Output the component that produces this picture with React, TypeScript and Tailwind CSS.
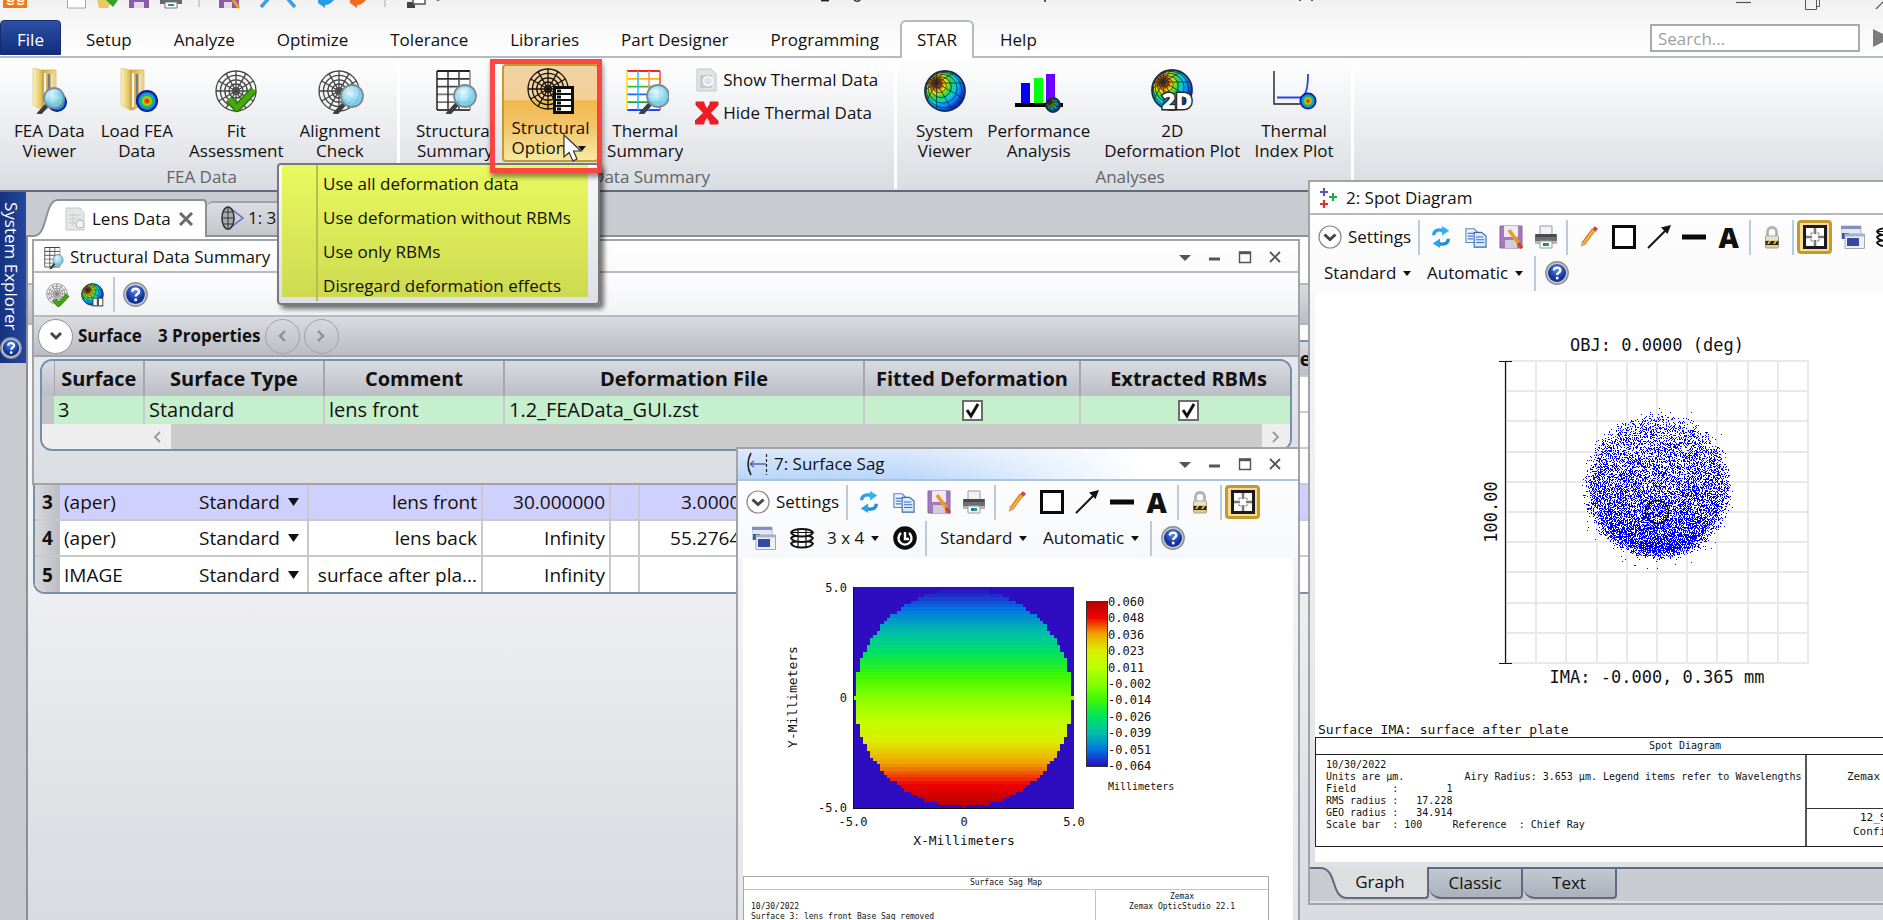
import type { ReactNode } from "react";

// ---------- shared colours ----------

type Stop = [number, number, number, number];

const RAINBOW: Stop[] = [
  [0, 45, 12, 192],
  [0.1, 0, 120, 225],
  [0.2, 0, 190, 170],
  [0.3, 0, 228, 95],
  [0.4, 60, 248, 0],
  [0.5, 135, 255, 0],
  [0.6, 188, 255, 0],
  [0.7, 220, 238, 0],
  [0.8, 240, 165, 0],
  [0.9, 240, 0, 0],
  [1, 178, 0, 0],
];

function rainbow(t: number) {
  const v = Math.min(1, Math.max(0, t));
  for (let i = 1; i < RAINBOW.length; i++) {
    const a = RAINBOW[i - 1];
    const b = RAINBOW[i];
    if (v <= b[0]) {
      const k = (v - a[0]) / (b[0] - a[0]);
      const mix = (n: 1 | 2 | 3) => Math.round(a[n] + (b[n] - a[n]) * k);
      return `rgb(${mix(1)},${mix(2)},${mix(3)})`;
    }
  }
  return "rgb(178,0,0)";
}

function Defs() {
  return (
    <svg width="0" height="0" className="absolute" aria-hidden="true">
      <defs>
        <radialGradient id="globe" cx="0.28" cy="0.3" r="0.78">
          <stop offset="0" stopColor="#8c1500" />
          <stop offset="0.16" stopColor="#d04400" />
          <stop offset="0.3" stopColor="#f4e000" />
          <stop offset="0.46" stopColor="#30d840" />
          <stop offset="0.62" stopColor="#00ccf0" />
          <stop offset="0.82" stopColor="#0a74ff" />
          <stop offset="1" stopColor="#0018c8" />
        </radialGradient>
        <radialGradient id="spot">
          <stop offset="0" stopColor="#d01000" />
          <stop offset="0.25" stopColor="#f08000" />
          <stop offset="0.35" stopColor="#b8d800" />
          <stop offset="0.52" stopColor="#20b860" />
          <stop offset="0.7" stopColor="#00a0e0" />
          <stop offset="0.85" stopColor="#1020c0" />
          <stop offset="1" stopColor="#101070" />
        </radialGradient>
        <linearGradient id="folder" x1="0" x2="1">
          <stop offset="0" stopColor="#fdf3b8" />
          <stop offset="1" stopColor="#e0bc56" />
        </linearGradient>
        <linearGradient id="folderShade" x1="0" x2="1">
          <stop offset="0" stopColor="#c9a544" />
          <stop offset="1" stopColor="#f6dc8c" />
        </linearGradient>
        <radialGradient id="lensGlass" cx="0.4" cy="0.35">
          <stop offset="0" stopColor="#eefcff" />
          <stop offset="0.6" stopColor="#a4e4f6" />
          <stop offset="1" stopColor="#74cdea" />
        </radialGradient>
        <radialGradient id="helpBall" cx="0.5" cy="0.3">
          <stop offset="0" stopColor="#5f8ce8" />
          <stop offset="1" stopColor="#12349c" />
        </radialGradient>
        <linearGradient id="bar" x1="0" y1="0" x2="0" y2="1">
          {RAINBOW.map(([at]) => (
            <stop key={at} offset={at} stopColor={rainbow(1 - at)} />
          ))}
        </linearGradient>
      </defs>
    </svg>
  );
}

// ---------- ribbon icons ----------

function Lens({ x, y, r = 9 }: { x: number; y: number; r?: number }) {
  return (
    <g>
      <path
        d={`M${x - r * 0.7} ${y + r * 0.7}L${x - r * 1.5} ${y + r * 1.6}`}
        stroke="#3a3f44"
        strokeWidth={r * 0.42}
        strokeLinecap="round"
      />
      <circle cx={x} cy={y} r={r} fill="url(#lensGlass)" fillOpacity="0.92" stroke="#7d8c94" strokeWidth="1.8" />
    </g>
  );
}

function Target({ cx, cy, r, color = "#2f2f2f" }: { cx: number; cy: number; r: number; color?: string }) {
  const spokes = [0, 30, 60, 90, 120, 150];
  return (
    <g stroke={color} fill="none" strokeWidth="1.3">
      {[1, 0.78, 0.56, 0.35, 0.16].map((k) => (
        <circle key={k} cx={cx} cy={cy} r={r * k} />
      ))}
      {spokes.map((a) => {
        const dx = Math.cos((a * Math.PI) / 180) * r;
        const dy = Math.sin((a * Math.PI) / 180) * r;
        return <path key={a} d={`M${cx - dx} ${cy - dy}L${cx + dx} ${cy + dy}`} />;
      })}
    </g>
  );
}

function Folder() {
  return (
    <g>
      <path d="M8 2L17 4V44L8 39Z" fill="url(#folder)" stroke="#d8c070" strokeWidth="0.6" />
      <path d="M17 4H31V38L20 44H17Z" fill="url(#folderShade)" stroke="#c8a850" strokeWidth="0.6" />
      <path d="M20 7V41" stroke="#f4f4ee" strokeWidth="2" />
      <path d="M24 8V38" stroke="#7c7c78" strokeWidth="2.4" />
      <path d="M27 8V36" stroke="#e8e4d8" strokeWidth="1.6" />
    </g>
  );
}

function Globe({ cx, cy, r }: { cx: number; cy: number; r: number }) {
  const fx = cx - r * 0.42;
  const fy = cy - r * 0.4;
  const rings = [0.18, 0.34, 0.52, 0.72, 0.88];
  return (
    <g>
      <circle cx={cx} cy={cy} r={r} fill="url(#globe)" stroke="#1c2c50" strokeWidth="1.8" />
      <g fill="none" stroke="#12302c" strokeWidth="0.8">
        {rings.map((k) => (
          <circle key={k} cx={fx + (cx - fx) * k} cy={fy + (cy - fy) * k} r={r * k} />
        ))}
        {[0, 30, 60, 90, 120, 150, 180, 210, 240, 270, 300, 330].map((a) => {
          const ux = Math.cos((a * Math.PI) / 180);
          const uy = Math.sin((a * Math.PI) / 180);
          const ox = fx - cx;
          const oy = fy - cy;
          const b = ox * ux + oy * uy;
          const t = -b + Math.sqrt(b * b - (ox * ox + oy * oy - r * r));
          return <path key={a} d={`M${fx} ${fy}L${fx + ux * t} ${fy + uy * t}`} />;
        })}
      </g>
    </g>
  );
}

function Grid({ colorful = false, w = 33, h = 39 }: { colorful?: boolean; w?: number; h?: number }) {
  const rows = colorful
    ? ["#ff2020", "#ffb400", "#30c030", "#2060ff", "#20a040", "#2040ff"]
    : ["#222", "#333", "#444", "#777", "#777", "#444"];
  const cols = colorful ? ["#ffe000", "#20c0ff", "#ff9060", "#ff4040"] : ["#222", "#333", "#444", "#888"];
  return (
    <g>
      <rect x="6" y="5" width={w} height={h} fill="#fff" />
      {rows.map((c, i) => (
        <path key={i} d={`M6 ${5 + (h / 5) * i}h${w}`} stroke={c} strokeWidth="1.8" />
      ))}
      {cols.map((c, i) => (
        <path key={i} d={`M${6 + (w / 3) * i} 5v${h}`} stroke={c} strokeWidth="1.5" />
      ))}
    </g>
  );
}

function Ico({ children, size = 48 }: { children: ReactNode; size?: number }) {
  return (
    <svg width={size} height={size} viewBox="0 0 48 48" fill="none" aria-hidden="true" className="shrink-0">
      {children}
    </svg>
  );
}

const CheckMark = <path d="M17 33L25 42L42 24" stroke="#2c7c08" strokeWidth="8" strokeLinejoin="round" />;
const CheckMarkTop = <path d="M17 33L25 42L42 24" stroke="#46aa0c" strokeWidth="5" strokeLinejoin="round" />;

const icons = {
  feaViewer: (
    <Ico>
      <Folder />
      <circle cx="32" cy="36" r="10" fill="url(#spot)" />
      <Lens x={29} y={32} r={10} />
    </Ico>
  ),
  loadFea: (
    <Ico>
      <Folder />
      <circle cx="34" cy="35" r="11" fill="url(#spot)" />
    </Ico>
  ),
  fit: (
    <Ico>
      <Target cx={24} cy={25} r={20} color="#444" />
      {CheckMark}
      {CheckMarkTop}
    </Ico>
  ),
  alignment: (
    <Ico>
      <Target cx={23} cy={25} r={20} color="#444" />
      <Lens x={36} y={30} r={11} />
    </Ico>
  ),
  summary: (
    <Ico>
      <Grid />
      <Lens x={34} y={30} r={11} />
    </Ico>
  ),
  options: (
    <Ico>
      <Target cx={21} cy={23} r={20} color="#15110a" />
      <rect x="27.500" y="21.500" width="18" height="25" fill="#fff" stroke="#0c0c0c" strokeWidth="3" />
      <path d="M27 28H45M26 34H45M26 40H45" stroke="#111" strokeWidth="1.800" />
      <path d="M30 25h4M30 31h4M30 37h4M30 43h4" stroke="#111" strokeWidth="3" />
    </Ico>
  ),
  thermal: (
    <Ico>
      <Grid colorful />
      <Lens x={37} y={30} r={11} />
    </Ico>
  ),
  system: (
    <Ico>
      <Globe cx={24} cy={25} r={20} />
    </Ico>
  ),
  performance: (
    <Ico>
      <path d="M0 39H48" stroke="#000" strokeWidth="4" />
      <path d="M6 17h9v20H6z" fill="#0000ff" />
      <path d="M19 12h9v25h-9z" fill="#00ff10" />
      <path d="M31 8h9v29h-9z" fill="#6a00ff" />
      <Globe cx={38} cy={39} r={7} />
    </Ico>
  ),
  plot2d: (
    <Ico>
      <Globe cx={24} cy={24} r={20} />
      <text
        x="14"
        y="43"
        fontSize="23"
        fontWeight="800"
        fontFamily="Open Sans, sans-serif"
        fill="#fff"
        stroke="#2a2a2a"
        strokeWidth="3"
        paintOrder="stroke"
      >
        2D
      </text>
    </Ico>
  ),
  thermalIndex: (
    <Ico>
      <path d="M4 5V38H30" stroke="#222" strokeWidth="1.4" />
      <path d="M7 31.500H30Q38 31 38 8" stroke="#2244ee" strokeWidth="1.8" />
      <circle cx="38" cy="35" r="8.500" fill="url(#spot)" />
    </Ico>
  ),
};

// ---------- small toolbar icons ----------

function Tiny({ children, size = 24 }: { children: ReactNode; size?: number }) {
  return (
    <svg width={size} height={size} viewBox="0 0 24 24" fill="none" aria-hidden="true" className="shrink-0">
      {children}
    </svg>
  );
}

function HelpIcon({ size = 24 }: { size?: number }) {
  return (
    <Tiny size={size}>
      <circle cx="12" cy="12" r="11.200" fill="#c4c8cc" stroke="#8c9094" strokeWidth="1.400" />
      <circle cx="12" cy="12" r="9" fill="url(#helpBall)" />
      <path d="M8.800 9.400C8.800 5.600 15.400 5.600 15.400 9.300C15.400 11.600 12.200 11.500 12.200 14" stroke="#fff" strokeWidth="2.300" />
      <circle cx="12.200" cy="17" r="1.500" fill="#fff" />
    </Tiny>
  );
}

const tiny = {
  refresh: (
    <Tiny size={22}>
      <path d="M4 10C4 5 9 3 14 5" stroke="#2aa0e8" strokeWidth="3.600" />
      <path d="M13 0L21 5L13 10.500Z" fill="#38b0f0" />
      <path d="M20 14C20 19 15 21 10 19" stroke="#1c90dc" strokeWidth="3.600" />
      <path d="M11 13.500L3 19L11 24Z" fill="#2aa4ea" />
    </Tiny>
  ),
  copy: (
    <Tiny size={22}>
      <path d="M1 3H10L14 7V18H1Z" fill="#eaf2fc" stroke="#5b84c4" strokeWidth="1.200" />
      <path d="M3 8H10M3 11H9M3 14H9" stroke="#4a7cd0" strokeWidth="1.300" />
      <path d="M10 7H18L23 11V23H10Z" fill="#dceafb" stroke="#3a64ac" strokeWidth="1.200" />
      <path d="M12 12H20M12 15H21M12 18H21" stroke="#3a70cc" strokeWidth="1.300" />
    </Tiny>
  ),
  save: (
    <Tiny>
      <path d="M1 1H23V23H1Z" fill="#a478bc" stroke="#8a62a4" strokeWidth="1" />
      <path d="M5 1H19V12H5Z" fill="#eceaf2" />
      <path d="M6 15H18V23H6Z" fill="#d2ccda" />
      <path d="M10 5L20 19" stroke="#f09a20" strokeWidth="3.600" />
      <path d="M19 18L23 23" stroke="#d04020" strokeWidth="3" />
    </Tiny>
  ),
  print: (
    <Tiny>
      <path d="M6 1H18V10H6Z" fill="#f2f2f2" stroke="#9a9a9a" />
      <path d="M1 9H23V18H1Z" fill="#6c6f72" />
      <path d="M2 9H22V12H2Z" fill="#484a4c" />
      <path d="M1 16H23V19H1Z" fill="#b4b6b8" />
      <path d="M6 16H18V23H6Z" fill="#fff" stroke="#999" />
      <path d="M9 18H12V21H9Z" fill="#2070d0" />
      <path d="M12 18H15V21H12Z" fill="#28a070" />
    </Tiny>
  ),
  pencil: (
    <Tiny size={22}>
      <path d="M6 19L17 4" stroke="#c87810" strokeWidth="4.600" />
      <path d="M6.500 18.500L17 4.500" stroke="#f8b040" strokeWidth="2.600" />
      <path d="M17.500 5L20 1.500" stroke="#d04838" strokeWidth="4.600" />
      <path d="M3 23L4 16L9 20Z" fill="#d8a870" />
    </Tiny>
  ),
  rect: (
    <Tiny>
      <rect x="1.500" y="1.500" width="21" height="21" fill="#fff" stroke="#0a0a0a" strokeWidth="3" />
    </Tiny>
  ),
  arrow: (
    <Tiny>
      <path d="M1 23L18 6" stroke="#111" strokeWidth="2" />
      <path d="M24 0L20.500 9L14 2.500Z" fill="#111" />
    </Tiny>
  ),
  line: (
    <Tiny>
      <path d="M0 12H24" stroke="#0a0a0a" strokeWidth="5" />
    </Tiny>
  ),
  lock: (
    <Tiny>
      <path d="M7.500 13V7C7.500 1 16.500 1 16.500 7V13" stroke="#b4b4b4" strokeWidth="2.800" />
      <rect x="5.500" y="11" width="13" height="12" rx="1" fill="#d4cca8" stroke="#a8a284" />
      <path d="M5.500 16H18.500V20H5.500Z" fill="#2c2810" />
      <path d="M7 19L9 16H11L9 19ZM13 19L15 16H17L15 19Z" fill="#f0c810" />
      <path d="M6 11.500H18V15H6Z" fill="#e6e2d4" />
    </Tiny>
  ),
  fit: (
    <Tiny>
      <rect x="1.500" y="1.500" width="21" height="21" fill="#fff" stroke="#1c1a1a" strokeWidth="3" />
      <path d="M12 3V9M12 15V21M3 12H9M15 12H21" stroke="#7c7a7a" strokeWidth="2.600" />
      <path d="M9 7V9H7M15 7V9H17M9 17V15H7M15 17V15H17" stroke="#8c8a8a" strokeWidth="1" />
    </Tiny>
  ),
  windows: (
    <Tiny>
      <path d="M0 1H20V13H0Z" fill="#e4e8f0" stroke="#b4bcc8" />
      <path d="M0 1H20V4H0Z" fill="#8290c4" />
      <path d="M1 8H8V14H1Z" fill="#3c50a8" />
      <path d="M4 9H23.500V23.500H4Z" fill="#eef0f4" stroke="#a0a8b4" />
      <path d="M6 13H18V21H6Z" fill="#3448a8" />
      <path d="M4 9H23V11.500H4Z" fill="#a8b2d0" />
    </Tiny>
  ),
  layers: (
    <Tiny>
      <g stroke="#111" strokeWidth="1.800">
        <path d="M1 17.500Q3 15 12 15Q21 15 23 17.500Q21 21.500 12 21.500Q3 21.500 1 17.500Z" fill="#fff" />
        <path d="M1 12Q3 9.500 12 9.500Q21 9.500 23 12Q21 16 12 16Q3 16 1 12Z" fill="#fff" />
        <path d="M1 6.500Q3 3 12 3Q21 3 23 6.500Q21 10.500 12 10.500Q3 10.500 1 6.500Z" fill="#fff" />
        <path d="M8 3V10M16 3V10M8 11V16M16 11V16M8 17V21M16 17V21M2 6.500H22" strokeWidth="1.200" />
      </g>
    </Tiny>
  ),
  clock: (
    <Tiny>
      <circle cx="12" cy="12" r="11.800" fill="#0c0c0c" />
      <path d="M8 7A6.500 6.500 0 1 0 16 7" stroke="#fff" strokeWidth="2.400" />
      <path d="M12 6V13H16" stroke="#fff" strokeWidth="2.400" />
    </Tiny>
  ),
};

function Caret() {
  return (
    <svg width="8" height="5" viewBox="0 0 8 5" aria-hidden="true" className="pointer-events-none shrink-0">
      <path d="M0 0H8L4 5Z" fill="#111" />
    </svg>
  );
}

function Picker({ label, value }: { label: string; value: string }) {
  return (
    <label className="flex items-center gap-1.5">
      <select aria-label={label} defaultValue={value} className="appearance-none bg-transparent outline-none">
        <option>{value}</option>
      </select>
      <Caret />
    </label>
  );
}

// ---------- ribbon ----------

function QuickAccess() {
  return (
    <svg width="100%" height="20" aria-hidden="true" className="block h-5">
      <path d="M3 0H27V8H3Z" fill="#ee7a18" />
      <path d="M7 3Q11 6 14 3M17 3Q21 6 24 3M7 0Q12 3 14 0M17 0Q22 3 24 0" stroke="#fff" strokeWidth="1.600" fill="none" />
      <path d="M67.500 -2V8H85.500V-2" fill="#fff" stroke="#a8a8a8" />
      <path d="M97 0L99 8H108L112 0Z" fill="#e8c860" />
      <path d="M106 0H118L113 7Z" fill="#30a030" />
      <path d="M129 0H149V8H129Z" fill="#8e5aa8" />
      <path d="M134 2H144V8H134Z" fill="#e4dcec" />
      <path d="M160 0H182V4H160Z" fill="#66696c" />
      <path d="M165 2H177V8H165Z" fill="#fff" stroke="#777" />
      <path d="M168 4H174V6H168Z" fill="#2090a0" />
      <path d="M199 0V7M385 0V7" stroke="#b8c4d0" strokeWidth="1.500" />
      <path d="M219 0H239V8H219Z" fill="#8e5aa8" />
      <path d="M224 2H232V8H224Z" fill="#e4dcec" />
      <path d="M233 0L239 8" stroke="#f09a20" strokeWidth="3" />
      <path d="M261 7L269 -2M295 7L287 -2" stroke="#3a9ce4" strokeWidth="3.500" />
      <path d="M318 0H334Q330 5 325 5V8L318 3Z" fill="#2a9ce4" />
      <path d="M350 0H366Q362 5 357 5V8L350 3Z" fill="#f06a20" />
      <path d="M407 2H415V8H407Z" fill="#444" />
      <path d="M413 -2V4H425V-2" fill="#fff" stroke="#555" strokeWidth="1.500" />
      <path d="M436 0H440L438 1Z" fill="#444" />
      <path d="M821 0.700H829" stroke="#222" strokeWidth="1.400" />
      <path d="M854 0Q858 3 861 -1" stroke="#222" strokeWidth="1.300" fill="none" />
      <path d="M1045 0V2M1300 0V1M1312 0V1" stroke="#222" strokeWidth="1.500" />
      <path d="M1736 2.500H1751" stroke="#555" strokeWidth="1.200" />
      <path d="M1805.500 -1V9.500H1816.500V-1M1816.500 6.500H1819.500V-1" stroke="#555" fill="none" />
      <path d="M1876 9L1886 -1" stroke="#555" strokeWidth="1.200" />
    </svg>
  );
}

const TABS_LEFT = ["Setup", "Analyze", "Optimize", "Tolerance", "Libraries", "Part Designer", "Programming"];

function RibbonTabs() {
  return (
    <nav className="flex h-[38px] items-end border-b-2 border-[#b6bac2]">
      <button className="mb-[1px] h-[35px] w-[61px] rounded-t-sm border border-[#142c70] bg-linear-to-b from-[#2b50a4] to-[#122e7c] pt-1 text-white">
        File
      </button>
      <div className="ml-1 flex h-9">
        {TABS_LEFT.map((tab) => (
          <button key={tab} className="px-[21px] pt-1">
            {tab}
          </button>
        ))}
      </div>
      <button className="-mb-[2px] h-[38px] w-[74px] rounded-t-md border-2 border-b-0 border-[#b6bac2] bg-white">
        STAR
      </button>
      <button className="h-9 px-[26px] pt-1">Help</button>
      <div className="ml-auto flex h-9 items-center">
        <input
          aria-label="Search"
          placeholder="Search..."
          className="h-7 w-[210px] border-2 border-[#a9a9b0] bg-white px-1.5 placeholder-[#a0a0a0] outline-none"
        />
        <svg width="10" height="18" aria-hidden="true" className="ml-[13px]">
          <path d="M0 0L18 9L0 18Z" fill="#7c7c7c" />
        </svg>
      </div>
    </nav>
  );
}

function BigButton({ icon, lines }: { icon: ReactNode; lines: [string, string] }) {
  return (
    <button className="flex h-[102px] flex-col items-center px-2 pt-1">
      {icon}
      <span className="mt-[7px] block h-10 overflow-hidden leading-5 whitespace-nowrap">
        {lines[0]}
        <br />
        {lines[1]}
      </span>
    </button>
  );
}

function Group({ label, className, children }: { label: string; className: string; children: ReactNode }) {
  return (
    <section className={`flex h-[131px] shrink-0 flex-col border-r-3 border-white pt-1 ${className}`}>
      <div className="flex h-[105px]">{children}</div>
      <h2 className="text-center leading-5 text-[#60646a]">{label}</h2>
    </section>
  );
}

const MENU = [
  "Use all deformation data",
  "Use deformation without RBMs",
  "Use only RBMs",
  "Disregard deformation effects",
];

function StructuralOptions() {
  return (
    <div className="relative">
      <button className="flex h-[98px] w-[97px] flex-col items-center rounded-sm border-2 border-[#c49a2c] bg-[linear-gradient(#efd3a4_0%,#f3cf96_36%,#f0b84e_37%,#f3c66c_65%,#f8e9a0_100%)]">
        {icons.options}
        <span className="mt-1 flex h-10 flex-col items-start leading-5">
          <span>Structural</span>
          <span className="flex items-center gap-1">
            Options
            <Caret />
          </span>
        </span>
      </button>

      <ul
        role="menu"
        className="absolute top-[99px] -left-[225px] z-20 h-[142px] w-[323px] rounded-sm border-2 border-[#77797d] bg-linear-to-b from-[#fafafa] to-[#dcdfe4] pr-[10px] pl-[3px] shadow-[4px_4px_5px_rgba(0,0,0,0.55)]"
      >
        <li className="h-[132px] bg-linear-to-b from-[#e9f95e] to-[#cdda51]">
          <ul className="ml-[34px] border-l-2 border-[#b3c04e]">
            {MENU.map((item) => (
              <li key={item}>
                <button role="menuitem" className="flex h-[34px] w-full items-center pt-1 pl-[5px] whitespace-nowrap">
                  {item}
                </button>
              </li>
            ))}
          </ul>
        </li>
      </ul>

      <div className="pointer-events-none absolute -top-[5px] -left-3 z-30 h-[114px] w-[112px] border-5 border-[#fb3e3c]/95 shadow-[1px_4px_5px_rgba(0,0,0,0.45)]" />
      <svg
        width="20"
        height="28"
        viewBox="0 0 20 28"
        aria-hidden="true"
        className="pointer-events-none absolute top-[70px] left-[61px] z-30"
      >
        <path d="M1 1V23L6 18.500L10 27L14 25L10.500 17H18Z" fill="#fff" stroke="#333" strokeWidth="1.200" />
      </svg>
    </div>
  );
}

function Ribbon() {
  return (
    <header className="relative z-10 bg-linear-to-b from-[#f1f1f1] to-white to-[56px]">
      <QuickAccess />
      <RibbonTabs />
      <div className="flex h-[134px] border-b-2 border-[#5c6c7e] bg-linear-to-b from-white to-[#d9dce1]">
        <Group label="FEA Data" className="w-[400px] pl-1.5">
          <BigButton icon={icons.feaViewer} lines={["FEA Data", "Viewer"]} />
          <BigButton icon={icons.loadFea} lines={["Load FEA", "Data"]} />
          <BigButton icon={icons.fit} lines={["Fit", "Assessment"]} />
          <BigButton icon={icons.alignment} lines={["Alignment", "Check"]} />
        </Group>
        <Group label="Data Summary" className="w-[497px] pl-2">
          <BigButton icon={icons.summary} lines={["Structural", "Summary"]} />
          <div className="pt-0.5">
            <StructuralOptions />
          </div>
          <BigButton icon={icons.thermal} lines={["Thermal", "Summary"]} />
          <div className="ml-1 flex flex-col gap-[9px] pt-1.5">
            <button className="flex h-6 items-center gap-1">
              <Tiny>
                <path d="M2 1H16L21 6V23H2Z" fill="#e2e3e4" stroke="#c2c4c6" />
                <path d="M5 7H17V20H5Z" fill="#c8cacc" />
                <circle cx="13" cy="13" r="4.500" fill="#d4e4f4" stroke="#fff" strokeWidth="1.500" />
              </Tiny>
              Show Thermal Data
            </button>
            <button className="flex h-6 items-center gap-1">
              <Tiny>
                <path d="M1 1H9V3L12 8L15 3V1H23V4L15.500 12L23 20V23H15V21L12 16L9 21V23H0V20L8.500 12L1 4Z" fill="#ee1c25" stroke="#ee1c25" />
              </Tiny>
              Hide Thermal Data
            </button>
          </div>
        </Group>
        <Group label="Analyses" className="w-[457px] pl-3">
          <div className="flex *:px-[7px]">
            <BigButton icon={icons.system} lines={["System", "Viewer"]} />
            <BigButton icon={icons.performance} lines={["Performance", "Analysis"]} />
            <BigButton icon={icons.plot2d} lines={["2D", "Deformation Plot"]} />
            <BigButton icon={icons.thermalIndex} lines={["Thermal", "Index Plot"]} />
          </div>
        </Group>
      </div>
    </header>
  );
}

// ---------- window parts ----------

function WindowControls() {
  return (
    <div className="ml-auto flex items-center gap-4 pr-4">
      <button aria-label="Menu">
        <svg width="14" height="14" className="block">
          <path d="M1 5H13L7 11Z" fill="#555" />
        </svg>
      </button>
      <button aria-label="Minimize">
        <svg width="14" height="14" className="block">
          <path d="M1 9H12" stroke="#555" strokeWidth="3" />
        </svg>
      </button>
      <button aria-label="Maximize">
        <svg width="14" height="14" className="block">
          <path d="M1.500 2H12.500V12.500H1.500Z" fill="none" stroke="#555" strokeWidth="1.400" />
          <path d="M1 3H13" stroke="#555" strokeWidth="2.400" />
        </svg>
      </button>
      <button aria-label="Close">
        <svg width="14" height="14" className="block">
          <path d="M2 2L12 12M12 2L2 12" stroke="#555" strokeWidth="1.800" />
        </svg>
      </button>
    </div>
  );
}

function Tool({ label, children }: { label: string; children: ReactNode }) {
  return (
    <button aria-label={label} className="flex w-[35px] shrink-0 justify-center">
      {children}
    </button>
  );
}

function Sep() {
  return <span className="mx-[3px] h-[35px] w-0.5 shrink-0 bg-[#bccbdb]" />;
}

function DrawingTools() {
  return (
    <>
      <button className="mr-1 flex items-center gap-1.5 pl-2">
        <svg width="24" height="24" viewBox="0 0 24 24" aria-hidden="true">
          <circle cx="12" cy="12" r="11" fill="#fff" stroke="#8a8a8a" strokeWidth="1.200" />
          <path d="M6.500 9.500L12 14.500L17.500 9.500" fill="none" stroke="#444" strokeWidth="3" />
        </svg>
        Settings
      </button>
      <Sep />
      <Tool label="Refresh">{tiny.refresh}</Tool>
      <Tool label="Copy">{tiny.copy}</Tool>
      <Tool label="Save">{tiny.save}</Tool>
      <Tool label="Print">{tiny.print}</Tool>
      <Sep />
      <Tool label="Pencil">{tiny.pencil}</Tool>
      <Tool label="Rectangle">{tiny.rect}</Tool>
      <Tool label="Arrow">{tiny.arrow}</Tool>
      <Tool label="Line">{tiny.line}</Tool>
      <Tool label="Text">
        <span className="text-[28px] leading-6 font-extrabold">A</span>
      </Tool>
      <Sep />
      <Tool label="Lock">{tiny.lock}</Tool>
      <Sep />
      <button
        aria-label="Fit window"
        className="flex h-[34px] w-[35px] shrink-0 items-center justify-center rounded-sm border-3 border-[#c39a2d] bg-linear-to-b from-[#f6d9a4] to-[#f9df8e]"
      >
        {tiny.fit}
      </button>
    </>
  );
}

// ---------- lens data editor ----------

type LensRow = { n: string; kind: string; comment: string; radius: string; thickness: string; active?: boolean };

const LENS_ROWS: LensRow[] = [
  { n: "0", kind: "OBJECT", comment: "", radius: "", thickness: "" },
  { n: "1", kind: "", comment: "", radius: "", thickness: "" },
  { n: "2", kind: "", comment: "", radius: "", thickness: "" },
  { n: "3", kind: "(aper)", comment: "lens front", radius: "30.000000", thickness: "3.000000", active: true },
  { n: "4", kind: "(aper)", comment: "lens back", radius: "Infinity", thickness: "55.276400" },
  { n: "5", kind: "IMAGE", comment: "surface after pla...", radius: "Infinity", thickness: "" },
];

function LensTable() {
  return (
    <div className="overflow-hidden rounded-l-xl border-2 border-r-0 border-[#7590ac]">
      <table className="w-full table-fixed border-collapse text-[19px] leading-6">
        <colgroup>
          <col className="w-[25px]" />
          <col className="w-[248px]" />
          <col className="w-[174px]" />
          <col className="w-[128px]" />
          <col className="w-[29px]" />
          <col className="w-[128px]" />
          <col className="w-[527px]" />
          <col />
        </colgroup>
        <thead>
          <tr className="h-[34px] bg-linear-to-b from-[#d9dce1] to-[#bbbdc5]">
            <th />
            <th />
            <th />
            <th />
            <th />
            <th />
            <th />
            <th className="text-left">le</th>
          </tr>
        </thead>
        <tbody>
          {LENS_ROWS.map((row) => (
            <tr
              key={row.n}
              className={`h-9 border-t-2 border-[#c9c9c9] ${row.active ? "bg-[#d0d0fe]" : "bg-white"}`}
            >
              <th className="bg-linear-to-r from-[#d6d8dc] to-[#bbbdc4]">{row.n}</th>
              <td className="border-r-2 border-[#c9c9c9] px-1">
                <div className="flex justify-between">
                  <span>{row.kind}</span>
                  <span className="pr-1">
                    <label className="flex items-center gap-2">
                      <select aria-label={`Surface ${row.n} type`} className="appearance-none outline-none">
                        <option>Standard</option>
                      </select>
                      <svg width="11" height="8" aria-hidden="true" className="pointer-events-none">
                        <path d="M0 0H11L5.500 8Z" fill="#111" />
                      </svg>
                    </label>
                  </span>
                </div>
              </td>
              <td className="border-r-2 border-[#c9c9c9] px-1 text-right whitespace-nowrap">{row.comment}</td>
              <td className="border-r-2 border-[#c9c9c9] px-1 text-right">{row.radius}</td>
              <td className="border-r-2 border-[#c9c9c9]" />
              <td className="border-r-2 border-[#c9c9c9] px-1 text-right">{row.thickness}</td>
              <td />
              <td />
            </tr>
          ))}
        </tbody>
      </table>
    </div>
  );
}

function DocumentTabs() {
  return (
    <div className="flex h-[45px] items-end border-b-2 border-[#8f8f9c] bg-[#c9cbd1] pl-2">
      <svg width="24" height="38" viewBox="0 0 24 38" aria-hidden="true" className="-mb-[2px] shrink-0">
        <path d="M0 37C14 37 10 1 24 1V38H0Z" fill="#fff" />
        <path d="M0 37C14 37 10 1 24 1" fill="none" stroke="#8f8f9c" strokeWidth="2" />
      </svg>
      <button className="-mb-[2px] flex h-[38px] w-[149px] items-center gap-2 rounded-tr-sm border-t-2 border-r-2 border-[#8f8f9c] bg-white pl-1.5 whitespace-nowrap">
        <Tiny>
          <path d="M2 1H16L20 6V23H2Z" fill="#e4e6e8" stroke="#c6c8ca" />
          <path d="M5 8H17M5 12H17M5 16H12M9 6V19" stroke="#c8ccd0" />
          <circle cx="16" cy="17" r="4" fill="#eaf4fa" stroke="#b4b8bc" />
        </Tiny>
        <span className="-ml-1">Lens Data</span>
        <svg width="14" height="14" aria-hidden="true">
          <path d="M1 1L13 13M13 1L1 13" stroke="#6a6a6a" strokeWidth="3" />
        </svg>
      </button>
      <button className="flex h-[34px] w-[140px] items-center gap-2 rounded-t-md border-t-2 border-[#a0a0aa] bg-linear-to-b from-[#dcdde1] to-[#c4c6cc] pb-0.5 pl-[13px]">
        <Tiny>
          <path d="M10 2V22M10 2L23 12L10 22" stroke="#5560c0" strokeWidth="1.400" />
          <ellipse cx="8" cy="12" rx="6" ry="11" fill="#a8acb0" stroke="#333" strokeWidth="1.600" />
          <path d="M2 12H14M8 1V23M4 6H12M4 18H12" stroke="#333" />
        </Tiny>
        <span className="-ml-1">1: 3D</span>
      </button>
    </div>
  );
}

function LensDocument() {
  return (
    <div className="flex min-w-0 flex-1 flex-col">
      <DocumentTabs />
      <div className="flex-1 border-l-2 border-[#8c8d9a] bg-linear-to-b from-white via-[#eef0f2] to-[#d8dbdf]">
        <div className="h-[46px] bg-white" />
        <div className="h-[42px] border-y-2 border-[#b4b6bb] bg-linear-to-b from-[#d9dce1] to-[#bbbdc5]" />
        <div className="pt-[15px] pl-[5px]">
          <LensTable />
        </div>
      </div>
    </div>
  );
}

// ---------- structural data summary ----------

function Tick({ label }: { label: string }) {
  return (
    <label className="relative block h-[21px]">
      <input
        type="checkbox"
        defaultChecked
        aria-label={label}
        className="block size-[21px] appearance-none border-2 border-[#6c6c6c] bg-white"
      />
      <svg width="21" height="21" aria-hidden="true" className="pointer-events-none absolute top-0 left-0">
        <path d="M5 10L9 16L16 4" fill="none" stroke="#111" strokeWidth="3" />
      </svg>
    </label>
  );
}

function SummaryWindow() {
  return (
    <section className="absolute top-[47px] left-8 h-[246px] w-[1268px] border-2 border-[#a2a3a8] bg-linear-to-b from-[#f0f1f3] to-[#dadee2]">
      <header className="flex h-8 items-center border-b-2 border-[#b9bac0] bg-linear-to-b from-white to-[#fafafb] pt-px pl-2">
        <svg width="22" height="24" viewBox="0 0 48 48" preserveAspectRatio="none" aria-hidden="true" fill="none">
          <Grid />
          <Lens x={35} y={30} r={11} />
        </svg>
        <h2 className="pl-1.5">Structural Data Summary</h2>
        <WindowControls />
      </header>
      <div className="flex h-[44px] items-center border-b-2 border-[#b9bac0] bg-linear-to-b from-[#fdfdfe] to-[#f2f3f5] pt-px pl-1.5">
        <Tool label="Fit assessment">
          <Ico size={26}>
            <Target cx={22} cy={22} r={19} color="#777" />
            {CheckMark}
            {CheckMarkTop}
          </Ico>
        </Tool>
        <Tool label="2D deformation plot">
          <Ico size={26}>
            <Globe cx={23} cy={23} r={20} />
            <path d="M24 30H32V44H24ZM34 30H42V44H34Z" fill="#fff" stroke="#555" strokeWidth="2" />
          </Ico>
        </Tool>
        <Sep />
        <Tool label="Help">
          <HelpIcon size={25} />
        </Tool>
      </div>
      <div className="flex h-10 items-center gap-1 border-b-2 border-[#a2a3a8] bg-linear-to-b from-[#d9dbe0] to-[#bbbdc5] pl-1 font-bold">
        <button
          aria-label="Toggle properties"
          className="flex size-[35px] items-center justify-center rounded-full border border-[#8f9095] bg-white"
        >
          <svg width="14" height="10" aria-hidden="true">
            <path d="M2 2L7 7L12 2" fill="none" stroke="#444" strokeWidth="3" />
          </svg>
        </button>
        <span className="pl-px">Surface</span>
        <span className="pl-3">3 Properties</span>
        <button aria-label="Previous" className="flex size-[35px] items-center justify-center rounded-full border border-[#a0a2a7]">
          <svg width="8" height="14" aria-hidden="true">
            <path d="M7 2L2 7L7 12" fill="none" stroke="#8c8e94" strokeWidth="2.400" />
          </svg>
        </button>
        <button aria-label="Next" className="flex size-[35px] items-center justify-center rounded-full border border-[#a0a2a7]">
          <svg width="8" height="14" aria-hidden="true">
            <path d="M1 2L6 7L1 12" fill="none" stroke="#8c8e94" strokeWidth="2.400" />
          </svg>
        </button>
      </div>
      <div className="mx-1.5 mt-[2px] h-[92px] overflow-hidden rounded-xl border-2 border-[#7590ac] bg-[#cbcbcb]">
        <table className="w-[1254px] table-fixed border-collapse text-xl leading-6">
          <colgroup>
            <col className="w-3" />
            <col className="w-[90px]" />
            <col className="w-[180px]" />
            <col className="w-[180px]" />
            <col className="w-[360px]" />
            <col className="w-[216px]" />
            <col className="w-[216px]" />
          </colgroup>
          <thead>
            <tr className="h-[35px] bg-linear-to-b from-[#d9dce1] to-[#bbbdc5]">
              <th className="border-r border-[#a4a6ab]" />
              <th className="border-r-2 border-[#a4a6ab]">Surface</th>
              <th className="border-r-2 border-[#a4a6ab]">Surface Type</th>
              <th className="border-r-2 border-[#a4a6ab]">Comment</th>
              <th className="border-r-2 border-[#a4a6ab]">Deformation File</th>
              <th className="border-r-2 border-[#a4a6ab]">Fitted Deformation</th>
              <th>Extracted RBMs</th>
            </tr>
          </thead>
          <tbody>
            <tr className="h-[28px] bg-[#c5efcd]">
              <td className="bg-[#c2c4ca]" />
              <td className="border-r-2 border-[#c9c9c9] px-1">3</td>
              <td className="border-r-2 border-[#c9c9c9] px-1">Standard</td>
              <td className="border-r-2 border-[#c9c9c9] px-1">lens front</td>
              <td className="border-r-2 border-[#c9c9c9] px-1">1.2_FEAData_GUI.zst</td>
              <td className="border-r-2 border-[#c9c9c9]">
                <div className="flex justify-center">
                  <Tick label="Fitted Deformation" />
                </div>
              </td>
              <td>
                <div className="flex justify-center">
                  <Tick label="Extracted RBMs" />
                </div>
              </td>
            </tr>
          </tbody>
        </table>
        <div className="flex h-[25px] justify-between">
          <button aria-label="Scroll left" className="flex w-[129px] items-center justify-end bg-[#eeeeee] pr-2.5">
            <svg width="8" height="12" aria-hidden="true">
              <path d="M7 1L2 6L7 11" fill="none" stroke="#999" strokeWidth="1.800" />
            </svg>
          </button>
          <button aria-label="Scroll right" className="flex w-7 items-center justify-center bg-[#eeeeee]">
            <svg width="8" height="12" aria-hidden="true">
              <path d="M1 1L6 6L1 11" fill="none" stroke="#999" strokeWidth="1.800" />
            </svg>
          </button>
        </div>
      </div>
    </section>
  );
}

// ---------- surface sag ----------

const CELLS = 32; // cells either side of the axis
const BAR_LABELS = ["0.060", "0.048", "0.036", "0.023", "0.011", "-0.002", "-0.014", "-0.026", "-0.039", "-0.051", "-0.064"];

function SagPlot() {
  const size = 221;
  const cell = size / (2 * CELLS + 1);
  const rows = [];
  for (let j = -CELLS; j <= CELLS; j++) {
    const half = Math.floor(Math.sqrt(CELLS * CELLS - j * j));
    rows.push(
      <rect
        key={j}
        x={110 + (CELLS - half) * cell}
        y={29 + (j + CELLS) * cell}
        width={(2 * half + 1) * cell}
        height={cell + 0.5}
        fill={rainbow((j + CELLS) / (2 * CELLS))}
      />,
    );
  }
  return (
    <svg width="540" height="318" aria-label="Surface sag map" className="block text-[12px]">
      <g shapeRendering="crispEdges">
        <rect x="110" y="29" width={size} height={size} fill="#2e0cc0" />
        {rows}
        <path d="M110.500 29V250.500H331" stroke="#111" fill="none" />
        <rect x="343" y="43" width="21" height="165" fill="url(#bar)" stroke="#333" />
      </g>
      <g fontFamily="DejaVu Sans Mono, monospace" fill="#111">
        <text x="104" y="34" textAnchor="end">5.0</text>
        <text x="104" y="144" textAnchor="end">0</text>
        <text x="104" y="254" textAnchor="end">-5.0</text>
        <text x="110" y="268" textAnchor="middle">-5.0</text>
        <text x="221" y="268" textAnchor="middle">0</text>
        <text x="331" y="268" textAnchor="middle">5.0</text>
        {BAR_LABELS.map((label, i) => (
          <text key={label} x="365" y={48 + i * 16.4}>
            {label}
          </text>
        ))}
        <text x="365" y="232" fontSize="10">Millimeters</text>
        <text x="221" y="287" fontSize="13" textAnchor="middle">X-Millimeters</text>
        <text fontSize="13" textAnchor="middle" transform="translate(54 139) rotate(-90)">
          Y-Millimeters
        </text>
      </g>
    </svg>
  );
}

function SagWindow() {
  return (
    <section className="absolute top-[255px] left-[736px] w-[564px] border-2 border-[#a2a3a8] bg-linear-to-b from-[#f8f9fa] to-[#e2e4e7]">
      <header className="flex h-8 items-center border-b-2 border-[#a9c4dc] bg-[linear-gradient(90deg,transparent_30%,#fff_72%),linear-gradient(#dce9fb,#b9d6fb)] pl-2">
        <svg width="24" height="24" aria-hidden="true" fill="none">
          <path d="M5 1Q-1 12 5 23" stroke="#222" strokeWidth="1.600" />
          <path d="M4 12H20M4 12L8 9M4 12L8 15" stroke="#5560b8" strokeWidth="1.400" />
          <path d="M20.500 2V23" stroke="#222" strokeWidth="1.200" strokeDasharray="3 2" />
        </svg>
        <h2 className="pl-1">7: Surface Sag</h2>
        <WindowControls />
      </header>
      <div className="bg-linear-to-b from-[#fdfdfe] to-[#f7f8f9] pt-[3px] pb-0.5">
        <div className="flex h-9 items-center">
          <DrawingTools />
        </div>
        <div className="flex h-9 items-center pl-2">
          <Tool label="Windows">{tiny.windows}</Tool>
          <span className="mr-2 ml-[3px] flex">
            <Tool label="Layers">{tiny.layers}</Tool>
          </span>
          <Picker label="Grid size" value="3 x 4" />
          <span className="ml-2 flex">
            <Tool label="History">{tiny.clock}</Tool>
          </span>
          <Sep />
          <span className="ml-2.5 flex gap-4">
            <Picker label="Scale" value="Standard" />
            <Picker label="Mode" value="Automatic" />
          </span>
          <span className="ml-2 flex items-center">
            <Sep />
            <Tool label="Help">
              <HelpIcon />
            </Tool>
          </span>
        </div>
      </div>
      <div className="mx-[5px] bg-white font-['DejaVu_Sans_Mono',monospace] text-[8px] leading-[10px]">
        <SagPlot />
        <div className="mr-6 border border-[#a8a8a8]">
          <div className="border-b border-[#c4c4c4] text-center leading-3">Surface Sag Map</div>
          <div className="flex">
            <div className="flex-2 border-r border-[#c4c4c4] pt-3 pb-8 pl-[7px]">
              <p>10/30/2022</p>
              <p>Surface 3: lens front Base Sag removed</p>
            </div>
            <div className="flex-1 pt-0.5 text-center">
              <p>Zemax</p>
              <p>Zemax OpticStudio 22.1</p>
            </div>
          </div>
        </div>
      </div>
    </section>
  );
}

// ---------- spot diagram ----------

// Small deterministic generator so the ray pattern stays the same between renders.
function makeRandom(seed: number) {
  let s = seed;
  return () => {
    s = (s * 1664525 + 1013904223) % 4294967296;
    return s / 4294967296;
  };
}

function spotPath() {
  const rnd = makeRandom(42);
  const cx = 342;
  const cy = 193;
  let d = "";
  for (let y = -82; y <= 82; y++) {
    for (let x = -86; x <= 86; x++) {
      const r = Math.hypot(x, y) / 74;
      const depth = Math.max(0, (y + 73) / 146);
      let p = 0.3 + 0.38 * depth + 0.12 * Math.abs(x / 74) * depth;
      if (y > 30) p += ((y - 30) / 40) * 0.3;
      if (r > 0.86) p *= Math.max(0, 1 - (r - 0.86) / 0.16) + 0.015;
      if (r > 1.12) p = 0;
      if (rnd() < p) d += `M${cx + x} ${cy + y}h${rnd() < 0.2 ? 2 : 1}v1h-1z`;
    }
  }
  return d;
}

const SPOTS = spotPath();

function SpotPlot() {
  const lines = Array.from({ length: 11 }, (_, i) => i * 30.2);
  return (
    <svg width="560" height="425" aria-label="Spot diagram" className="block">
      <g stroke="#e8e8e8" strokeWidth="2" shapeRendering="crispEdges">
        {lines.map((v) => (
          <path key={v} d={`M190 ${68 + v}H493M${191 + v} 68V370`} />
        ))}
      </g>
      <path d={SPOTS} fill="#0000ff" shapeRendering="crispEdges" />
      <circle cx="342" cy="219" r="11.500" fill="none" stroke="#000040" strokeWidth="1.500" />
      <path d="M190.500 68V370M184 68.500H197M184 370.500H197" stroke="#111" strokeWidth="1.200" />
      <g fontFamily="DejaVu Sans Mono, monospace" fontSize="17" fill="#111" textAnchor="middle">
        <text x="342" y="58">OBJ: 0.0000 (deg)</text>
        <text x="342" y="390">IMA: -0.000, 0.365 mm</text>
        <text transform="translate(182 219) rotate(-90)">100.00</text>
      </g>
    </svg>
  );
}

const SPOT_TEXT = [
  "10/30/2022",
  "Units are µm.          Airy Radius: 3.653 µm. Legend items refer to Wavelengths",
  "Field      :        1",
  "RMS radius :   17.228",
  "GEO radius :   34.914",
  "Scale bar  : 100     Reference  : Chief Ray",
];

function SpotWindow() {
  return (
    <section className="absolute -top-3 left-[1308px] z-20 w-[754px] border-2 border-[#a2a3a8] bg-linear-to-b from-[#fafafb] to-[#dde0e4]">
      <header className="flex h-[33px] items-center border-b-2 border-[#b9bac0] bg-white pl-2">
        <svg width="22" height="24" aria-hidden="true">
          <path d="M6 2V10M2 6H10" stroke="#5558b0" strokeWidth="2.200" />
          <path d="M15 7V15M11 11H19" stroke="#20b040" strokeWidth="2.200" />
          <path d="M6 14V22M2 18H10" stroke="#e03028" strokeWidth="2.200" />
        </svg>
        <h2 className="pl-1.5">2: Spot Diagram</h2>
      </header>
      <div className="bg-linear-to-b from-[#fdfdfe] to-[#fafafb] pt-1 pb-0.5">
        <div className="flex h-9 items-center">
          <DrawingTools />
          <span className="ml-[3px] flex">
            <Tool label="Windows">{tiny.windows}</Tool>
            <Tool label="Layers">{tiny.layers}</Tool>
          </span>
        </div>
        <div className="flex h-9 items-center gap-4 pl-3.5">
          <Picker label="Scale" value="Standard" />
          <Picker label="Mode" value="Automatic" />
          <span className="-ml-2 flex items-center">
            <Sep />
            <Tool label="Help">
              <HelpIcon />
            </Tool>
          </span>
        </div>
      </div>
      <div className="mx-[5px] bg-white pb-[15px] font-['DejaVu_Sans_Mono',monospace] text-[10px] leading-3">
        <SpotPlot />
        <p className="pt-1 pl-[3px] text-[13px] leading-[15px]">Surface IMA: surface after plate</p>
        <div className="border border-[#222]">
          <div className="border-b border-[#222] text-center leading-4">Spot Diagram</div>
          <div className="flex h-[91px]">
            <div className="w-[491px] border-r-2 border-[#555] pt-1 pl-2.5 whitespace-pre">
              {SPOT_TEXT.map((line) => (
                <p key={line}>{line}</p>
              ))}
            </div>
            <div className="flex-1 text-[11px]">
              <p className="h-[54px] border-b border-[#333] pt-4 pl-10">Zemax OpticStudio 22.1</p>
              <p className="pt-0.5 pl-[53px] leading-[14px]">12_S</p>
              <p className="pl-[46px] leading-[14px]">Configuration 1 of 1</p>
            </div>
          </div>
        </div>
      </div>
      <div className="mt-[5px] flex h-9 items-start border-b-2 border-[#dfe1e4] bg-[#c9ccd1]">
        <svg width="37" height="32" viewBox="0 0 37 32" aria-hidden="true" className="shrink-0">
          <path d="M10 0C28 2 20 30 37 31V0Z" fill="#dcdee0" />
          <path d="M0 1H10C28 1 20 31 37 31" fill="none" stroke="#5f6b80" strokeWidth="2" />
        </svg>
        <button className="h-8 w-[82px] rounded-br-sm border-r-2 border-b-2 border-[#5f6b80] bg-[#dcdee0] pr-3.5">
          Graph
        </button>
        <button className="h-8 w-[94px] rounded-br-sm rounded-bl-xl border-t-2 border-r-2 border-b-2 border-[#5f6b80] bg-linear-to-b from-[#c3c9d1] to-[#a9b1bb]">
          Classic
        </button>
        <button className="h-8 w-[94px] rounded-br-sm rounded-bl-xl border-t-2 border-r-2 border-b-2 border-[#5f6b80] bg-linear-to-b from-[#c3c9d1] to-[#a9b1bb]">
          Text
        </button>
        <span className="h-0.5 flex-1 bg-[#5f6b80]" />
      </div>
    </section>
  );
}

export default function App() {
  return (
    <div className="flex h-screen w-full flex-col overflow-hidden bg-[#c9cbd1] font-['Open_Sans',sans-serif] text-[17px] leading-6 text-[#111]">
      <Defs />
      <Ribbon />
      <main className="relative flex flex-1">
        <aside className="w-[26px] shrink-0">
          <button className="flex h-[171px] w-[27px] flex-col items-center justify-between bg-linear-to-r from-[#14327e] to-[#2748a0] pt-2.5 pr-1.5 pb-1 text-white">
            <span className="leading-5 [writing-mode:vertical-rl]">System Explorer</span>
            <HelpIcon size={22} />
          </button>
        </aside>
        <LensDocument />
        <SummaryWindow />
        <SagWindow />
        <SpotWindow />
      </main>
    </div>
  );
}
